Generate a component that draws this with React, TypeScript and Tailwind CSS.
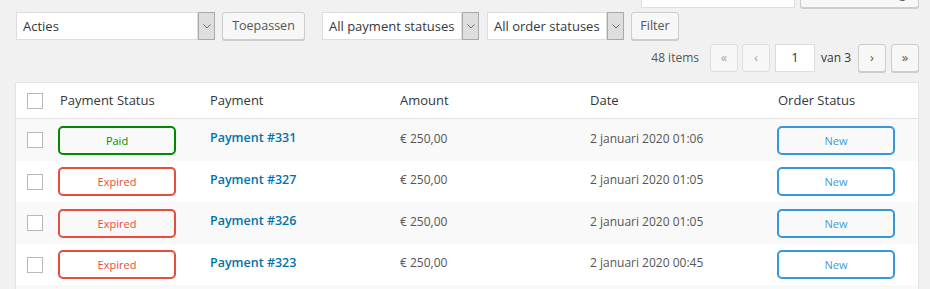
import { useState } from 'react';

function Chevron() {
  return (
    <svg width="8" height="5" viewBox="0 0 8 5" className="block">
      <path d="M0.5 0.5 L4 4 L7.5 0.5" fill="none" stroke="#6b6b6b" strokeWidth="1" />
    </svg>
  );
}

function Select({ label, width }: { label: string; width: string }) {
  return (
    <div className={`${width} h-[28px] flex shrink-0`}>
      <div className="flex-1 flex items-center pl-[6px] pt-[1px] bg-white border border-[#ddd] text-[13px] text-[#32373c] whitespace-nowrap overflow-hidden">
        {label}
      </div>
      <div className="w-[17px] flex items-center justify-center bg-[#dedede] border border-[#a9a9a9]">
        <Chevron />
      </div>
    </div>
  );
}

function Button({ children, className = '' }: { children: React.ReactNode; className?: string }) {
  return (
    <div
      className={`h-[28px] flex items-center justify-center shrink-0 bg-[#f7f7f7] border border-[#ccc] rounded-[3px] shadow-[0_1px_0_#ccc] text-[12.5px] text-[#555] ${className}`}
    >
      {children}
    </div>
  );
}

function PageButton({ label, disabled }: { label: string; disabled?: boolean }) {
  return (
    <div
      className={
        disabled
          ? 'w-[28px] h-[28px] flex items-center justify-center bg-[#f7f7f7] border border-[#ddd] rounded-[3px] text-[13px] text-[#a0a5aa]'
          : 'w-[28px] h-[28px] flex items-center justify-center bg-[#f7f7f7] border border-[#ccc] rounded-[3px] shadow-[0_1px_0_#ccc] text-[13px] text-[#555]'
      }
    >
      {label}
    </div>
  );
}

const badgeStyles: Record<string, string> = {
  Paid: 'border-[#008a00] text-[#008a00]',
  Expired: 'border-[#e74c3c] text-[#e74c3c]',
  New: 'border-[#3498db] text-[#3d9ad9]',
};

function Badge({ status }: { status: string }) {
  return (
    <div
      className={`w-[118px] h-[29px] flex items-center justify-center pt-[2px] border-2 rounded-[5px] text-[11px] ${badgeStyles[status]}`}
    >
      {status}
    </div>
  );
}

function Checkbox() {
  return <div className="w-[16px] h-[16px] ml-[11px] bg-white border border-[#b4b9be]" />;
}

export default function App() {
  const [payments] = useState([
    { status: 'Paid', id: 331, amount: '€ 250,00', date: '2 januari 2020 01:06', order: 'New' },
    { status: 'Expired', id: 327, amount: '€ 250,00', date: '2 januari 2020 01:05', order: 'New' },
    { status: 'Expired', id: 326, amount: '€ 250,00', date: '2 januari 2020 01:05', order: 'New' },
    { status: 'Expired', id: 323, amount: '€ 250,00', date: '2 januari 2020 00:45', order: 'New' },
  ]);

  return (
    <div className="w-[930px] h-[289px] overflow-hidden bg-[#f1f1f1] font-['Open_Sans',sans-serif]">
      {/* search box, scrolled mostly out of view */}
      <div className="flex ml-[641px] mt-[-20px] h-[28px] gap-[5px]">
        <div className="w-[154px] h-[28px] bg-white border border-[#ddd]" />
        <Button className="w-[119px] pl-[14px]">Zoek betaling</Button>
      </div>

      {/* bulk actions + filters */}
      <div className="flex items-center ml-[16px] mt-[4px] h-[28px]">
        <Select label="Acties" width="w-[199px]" />
        <Button className="w-[83px] ml-[7px]">Toepassen</Button>
        <Select label="All payment statuses" width="w-[157px] ml-[17px]" />
        <Select label="All order statuses" width="w-[137px] ml-[8px]" />
        <Button className="w-[48px] ml-[7px]">Filter</Button>
      </div>

      {/* pagination */}
      <div className="flex items-center justify-end pr-[11px] mt-[4px] h-[28px] text-[12px] text-[#555]">
        <span>48 items</span>
        <div className="flex items-center ml-[11px] gap-[4px]">
          <PageButton label="«" disabled />
          <PageButton label="‹" disabled />
        </div>
        <div className="w-[40px] h-[28px] ml-[5px] flex items-center justify-center bg-white border border-[#ddd] text-[13px] text-[#32373c]">
          1
        </div>
        <span className="ml-[6px] text-[#32373c]">van 3</span>
        <div className="flex items-center ml-[7px] gap-[5px]">
          <PageButton label="›" />
          <PageButton label="»" />
        </div>
      </div>

      {/* table */}
      <div className="mt-[10px] ml-[15px] w-[904px] bg-white border border-[#e5e5e5] shadow-[0_1px_1px_rgba(0,0,0,0.04)]">
        <div className="flex items-center h-[36px] border-b border-[#e1e1e1] text-[13px] text-[#32373c]">
          <div className="w-[42px] flex items-center">
            <Checkbox />
          </div>
          <div className="w-[152px] pl-[2px]">Payment Status</div>
          <div className="w-[190px]">Payment</div>
          <div className="w-[190px]">Amount</div>
          <div className="w-[187px]">Date</div>
          <div className="flex-1 pl-[1px]">Order Status</div>
        </div>

        {payments.map((p, i) => (
          <div
            key={p.id}
            className={`flex items-center ${i % 2 === 0 ? 'bg-[#f9f9f9] h-[42px]' : 'bg-white h-[41px]'}`}
          >
            <div className="w-[42px] flex items-center">
              <Checkbox />
            </div>
            <div className="w-[152px]">
              <Badge status={p.status} />
            </div>
            <div className="w-[190px] pb-[3px] text-[12.5px] font-semibold text-[#0073aa]">Payment #{p.id}</div>
            <div className="w-[190px] pb-[3px] text-[12px] text-[#555]">{p.amount}</div>
            <div className="w-[187px] pb-[3px] text-[12px] text-[#555]">{p.date}</div>
            <div className="flex-1">
              <Badge status={p.order} />
            </div>
          </div>
        ))}
        <div className="h-[10px] bg-[#f9f9f9]" />
      </div>
    </div>
  );
}
